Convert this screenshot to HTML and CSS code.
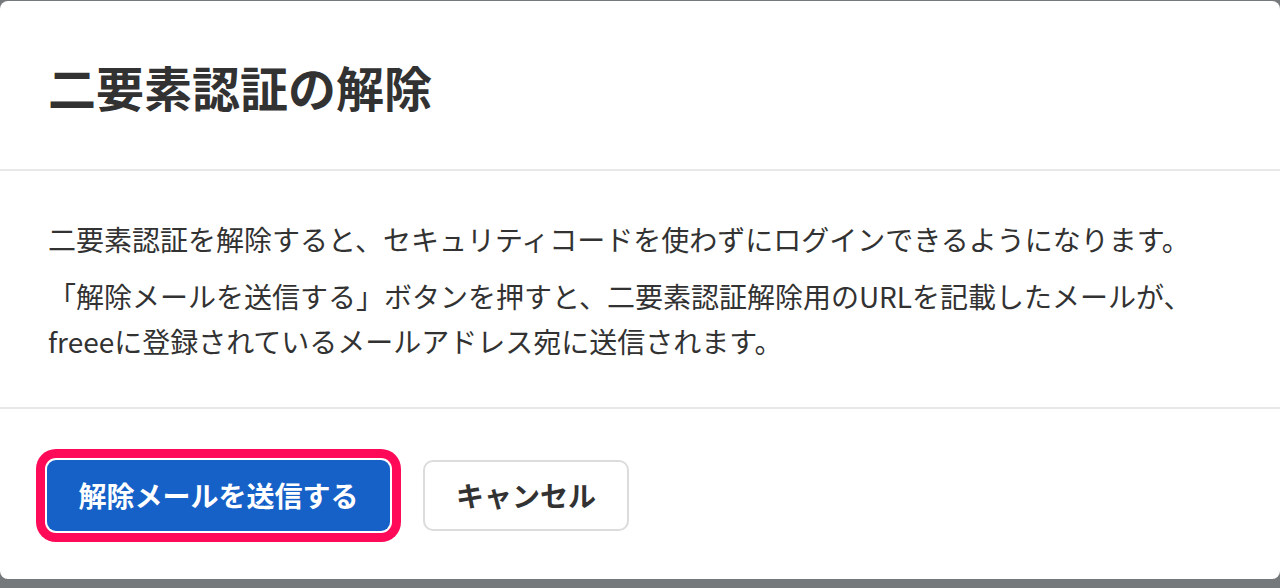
FILE: index.html
```html
<!DOCTYPE html>
<html lang="ja">
<head>
<meta charset="utf-8">
<title>二要素認証の解除</title>
<link rel="stylesheet" href="styles.css">
</head>
<body>
<div class="modal">
  <div class="modal-header">
    <h1 class="modal-title">二要素認証の解除</h1>
  </div>
  <div class="modal-body">
    <p class="text">二要素認証を解除すると、セキュリティコードを使わずにログインできるようになります。</p>
    <p class="text">「解除メールを送信する」ボタンを押すと、二要素認証解除用のURLを記載したメールが、<br>freeeに登録されているメールアドレス宛に送信されます。</p>
  </div>
  <div class="modal-footer">
    <button class="btn btn-primary" type="button">解除メールを送信する</button>
    <button class="btn btn-secondary" type="button">キャンセル</button>
  </div>
</div>
</body>
</html>
```
FILE: styles.css
```css
html, body {
  margin: 0;
  padding: 0;
}
body {
  background: #75797c;
  font-family: "Noto Sans CJK JP", "Noto Sans", sans-serif;
  color: #323232;
  height: 588px;
  overflow: hidden;
  padding-top: 1px;
  box-sizing: border-box;
}
.modal {
  background: #ffffff;
  width: 1280px;
  height: 578px;
  border-radius: 8px;
  display: flex;
  flex-direction: column;
}
.modal-header {
  height: 168px;
  padding: 0 48px;
  display: flex;
  align-items: center;
  border-bottom: 2px solid #e8e8e8;
  box-sizing: content-box;
}
.modal-title {
  margin: 0;
  font-size: 48px;
  font-weight: 700;
  line-height: 72px;
  padding-top: 2px;
  color: #323232;
}
.modal-body {
  padding: 46px 48px 44px;
  border-bottom: 2px solid #e8e8e8;
}
.text {
  margin: 0;
  font-size: 28px;
  line-height: 1.6;
  color: #323232;
}
.text + .text {
  margin-top: 12px;
}
.modal-footer {
  flex: 1;
  display: flex;
  align-items: center;
  gap: 33px;
  padding: 0 47px;
}
.btn {
  font-family: "Noto Sans CJK JP", "Noto Sans", sans-serif;
  font-size: 28px;
  font-weight: 700;
  height: 71px;
  border-radius: 8px;
  line-height: 1;
  cursor: pointer;
  margin-top: 2px;
  white-space: nowrap;
  box-sizing: border-box;
}
.btn-primary {
  background: #1661c8;
  color: #ffffff;
  border: none;
  padding: 0 31px;
  width: 343px;
  box-shadow: 0 0 0 2px #ffffff, 0 0 0 11px #ff0a58;
  border-radius: 9px;
}
.btn-secondary {
  background: #ffffff;
  color: #323232;
  border: 2px solid #dcdcdc;
  width: 206px;
  padding: 0 30px;
  border-radius: 10px;
}
```
